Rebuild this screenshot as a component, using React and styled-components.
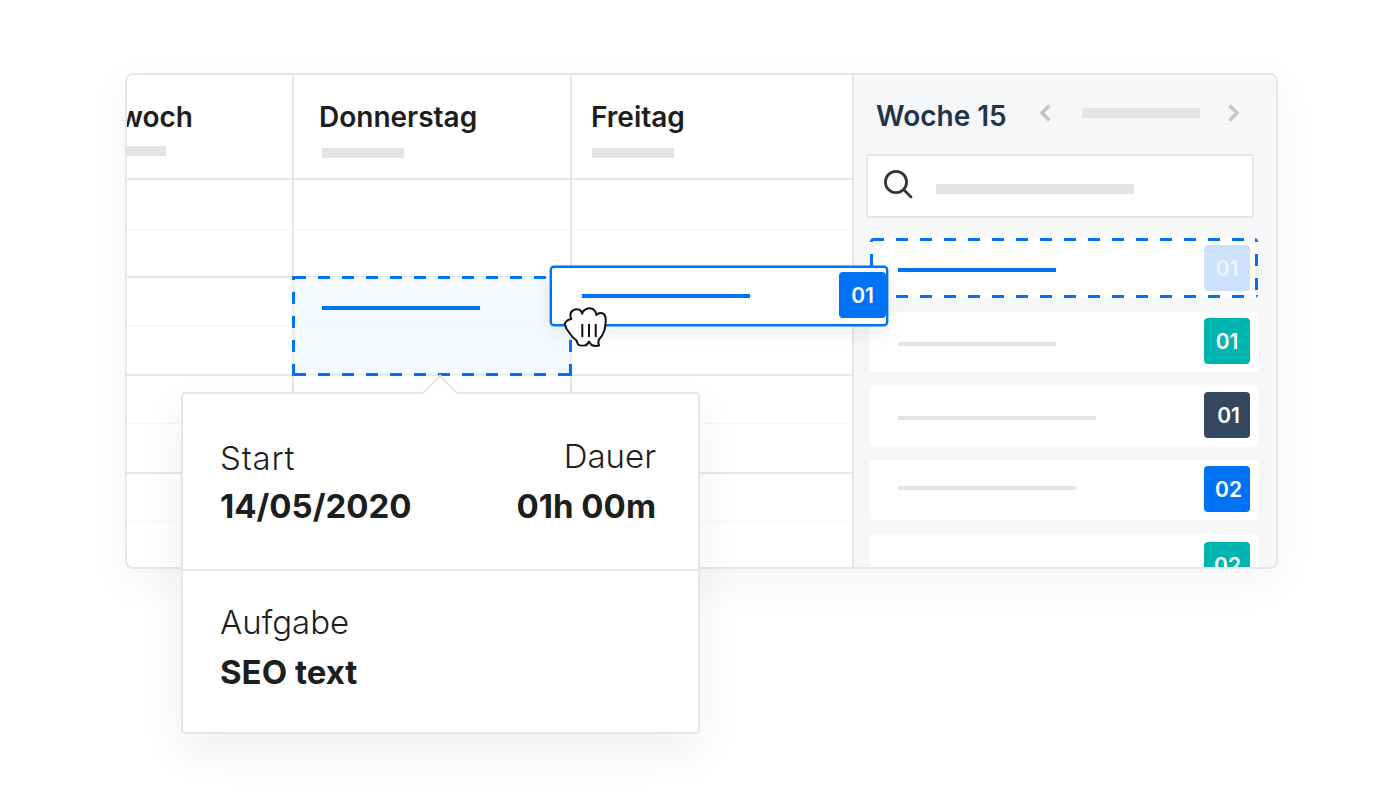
import React from "react";
import styled, { createGlobalStyle, css } from "styled-components";

const BLUE = "#0073f5";
const LINE = "#e6e6e6";
const BAR = "#e3e4e6";
const INK = "#1d1e20";

const Global = createGlobalStyle`
  html, body { margin: 0; padding: 0; background: #fff; }
  body { font-family: Inter, "Liberation Sans", sans-serif; color: ${INK}; overflow: hidden; }
`;

const dashedOutline = css`
  background-image:
    linear-gradient(90deg, ${BLUE} 50%, transparent 50%),
    linear-gradient(90deg, ${BLUE} 50%, transparent 50%),
    linear-gradient(0deg, ${BLUE} 50%, transparent 50%),
    linear-gradient(0deg, ${BLUE} 50%, transparent 50%);
  background-size: 24px 3px, 24px 3px, 3px 24px, 3px 24px;
  background-repeat: repeat-x, repeat-x, repeat-y, repeat-y;
  background-position: 2px 0, 2px 100%, 0 4px, 100% 4px;
`;

const Page = styled.div`
  width: 1400px;
  height: 804px;
  padding: 73px 0 0 125px;
  box-sizing: border-box;
`;

const Stage = styled.div`
  position: relative;
  width: 1153px;
  height: 496px;
`;

const Card = styled.div`
  display: flex;
  width: 100%;
  height: 100%;
  box-sizing: border-box;
  border: 2px solid ${LINE};
  border-radius: 8px;
  background: #fff;
  overflow: hidden;
  box-shadow: 0 12px 44px rgba(30, 40, 60, 0.05);
`;

const Calendar = styled.div`
  display: grid;
  flex: 0 0 727px;
  grid-template-columns: 167px 278px 282px;
  grid-template-rows: 105px 50px 48px repeat(3, 48px 50px);
  height: 100%;
  overflow: hidden;
`;

const DayHead = styled.div`
  display: flex;
  flex-direction: column;
  align-items: ${(p) => (p.$clipped ? "flex-end" : "flex-start")};
  box-sizing: border-box;
  padding: ${(p) => p.$pad};
  border-right: 2px solid ${LINE};
  border-bottom: 2px solid ${LINE};
  overflow: hidden;
`;

const DayName = styled.div`
  font-size: 28px;
  line-height: 32px;
  font-weight: 600;
  white-space: nowrap;
  flex: none;
`;

const DayBar = styled.div`
  width: 82px;
  height: 10px;
  background: ${BAR};
  margin: ${(p) => p.$margin};
`;

const Cell = styled.div`
  position: relative;
  box-sizing: border-box;
  border-right: 2px solid ${LINE};
  border-bottom: ${(p) => (p.$major ? `2px solid ${LINE}` : "1px solid #f5f5f5")};
`;

const GhostSlot = styled.div`
  position: absolute;
  left: -2px;
  top: -2px;
  z-index: 1;
  width: 280px;
  height: 100px;
  padding: 30px 0 0 30px;
  box-sizing: border-box;
  background-color: rgba(232, 243, 252, 0.5);
  ${dashedOutline}
`;

const Stroke = styled.div`
  width: ${(p) => p.$w}px;
  height: 4px;
  background: ${(p) => (p.$active ? BLUE : BAR)};
  margin-top: ${(p) => p.$top || 0}px;
`;

const Sidebar = styled.aside`
  flex: 1;
  min-width: 0;
  background: #f6f7f9;
  padding-left: 12px;
  overflow: hidden;
`;

const SideHead = styled.div`
  display: flex;
  align-items: center;
  height: 79px;
  box-sizing: border-box;
  padding: 3px 0 0 10px;
`;

const Week = styled.div`
  font-size: 28px;
  line-height: 32px;
  font-weight: 600;
  color: #22344a;
  white-space: nowrap;
`;

const Nav = styled.div`
  display: flex;
  align-items: center;
  margin: 0 0 7px 31px;
`;

const NavBar = styled.div`
  width: 118px;
  height: 10px;
  background: ${BAR};
  margin: 0 27px 0 30px;
`;

const Search = styled.div`
  display: flex;
  align-items: center;
  width: 388px;
  height: 64px;
  box-sizing: border-box;
  border: 2px solid ${LINE};
  background: #fff;
  padding: 0 0 4px 15px;
  margin-bottom: 20px;
`;

const SearchBar = styled.div`
  width: 198px;
  height: 10px;
  background: ${BAR};
  margin: 10px 0 0 23px;
`;

const TaskList = styled.div`
  display: flex;
  flex-direction: column;
  gap: 14px;
  padding-left: 4px;
  width: 388px;
`;

const Task = styled.div`
  flex: none;
  display: flex;
  justify-content: space-between;
  align-items: flex-start;
  height: 60px;
  box-sizing: border-box;
  padding: 6px 8px 0 28px;
  background-color: #fff;
  border-radius: 4px;
  ${(p) => p.$dashed && dashedOutline}
`;

const Badge = styled.div`
  flex: none;
  display: flex;
  align-items: center;
  justify-content: center;
  box-sizing: border-box;
  width: ${(p) => p.$w || 46}px;
  height: 46px;
  margin-top: ${(p) => p.$top || 0}px;
  padding-left: ${(p) => p.$shift || 0}px;
  border-radius: 4px;
  background: ${(p) => p.$bg};
  color: ${(p) => p.$fg || "#fff"};
  font-size: 21px;
  font-weight: 600;
`;

const DragCard = styled.div`
  position: absolute;
  left: 425px;
  top: 193px;
  z-index: 3;
  display: flex;
  justify-content: space-between;
  align-items: flex-start;
  width: 338px;
  height: 60px;
  box-sizing: border-box;
  padding: 4px 0 0 30px;
  border: 2px solid ${BLUE};
  border-radius: 4px;
  background: #fff;
  box-shadow: 0 0 0 0.4px ${BLUE}, 0 8px 20px rgba(30, 40, 60, 0.07);
`;

const Cursor = styled.svg`
  position: absolute;
  left: 438px;
  top: 234px;
  z-index: 4;
`;

const Tooltip = styled.div`
  position: absolute;
  left: 56px;
  top: 319px;
  z-index: 2;
  width: 519px;
  height: 342px;
  box-sizing: border-box;
  border: 2px solid ${LINE};
  border-radius: 4px;
  background: #fff;
  box-shadow: 0 18px 44px rgba(30, 40, 60, 0.07);
  &::before {
    content: "";
    position: absolute;
    left: 244px;
    top: -14px;
    width: 26px;
    height: 26px;
    box-sizing: border-box;
    transform: rotate(45deg);
    background: #fff;
    border-top: 2px solid ${LINE};
    border-left: 2px solid ${LINE};
  }
`;

const TipTop = styled.div`
  display: flex;
  justify-content: space-between;
  height: 177px;
  box-sizing: border-box;
  padding: 42px 42px 0 37px;
  border-bottom: 2px solid ${LINE};
`;

const TipBottom = styled.div`
  padding: 31px 37px 0;
`;

const Field = styled.div`
  display: flex;
  flex-direction: column;
  align-items: ${(p) => (p.$end ? "flex-end" : "flex-start")};
  padding-top: ${(p) => p.$drop || 0}px;
`;

const Label = styled.div`
  font-size: 33px;
  line-height: 40px;
  font-weight: 300;
  letter-spacing: ${(p) => p.$track || 0}px;
  color: ${INK};
  white-space: nowrap;
`;

const Value = styled.div`
  font-size: 33px;
  line-height: 40px;
  font-weight: 700;
  margin-top: ${(p) => p.$top || 10}px;
  color: ${INK};
  white-space: nowrap;
`;

const Chevron = ({ dir }) => (
  <svg width="14" height="20" viewBox="0 0 14 20" fill="none" stroke="#c6c6c8" strokeWidth="3.6" strokeLinejoin="miter">
    <polyline points={dir === "left" ? "11.5,2.5 4,10 11.5,17.5" : "2.5,2.5 10,10 2.5,17.5"} />
  </svg>
);

const SearchIcon = () => (
  <svg width="30" height="30" viewBox="0 0 30 30" fill="none" stroke="#333436" strokeWidth="2.8" strokeLinecap="round">
    <circle cx="13" cy="13" r="10.6" />
    <line x1="21" y1="21" x2="28" y2="28" />
  </svg>
);

const HandCursor = () => (
  <Cursor width="44" height="41" viewBox="0 0 44 41" aria-hidden="true">
    <path
      d="M1.700 16.700Q4 12.500 8.300 12Q5.500 5 11.700 2.500Q15.500 1.500 18 4L19.300 6.700Q20 2.500 25.500 1.200Q31 1 33 6L33.300 8Q37 4.500 41 7.200Q43.200 9.500 42.700 14Q42.500 20 41.200 24Q39.500 29 36 32.500Q34.800 35 36 38.500Q32 39.500 28.500 38L26 34.500Q24.500 38 21.700 38.500Q17 39 15 37.500Q14 34 13 33Q10 31 8 28L3.300 21.500Z"
      fill="#fff"
      stroke="#111"
      strokeWidth="2"
      strokeLinejoin="round"
    />
    <path d="M19.300 17v13M26 17v13M32.700 17v13" fill="none" stroke="#111" strokeWidth="2" />
  </Cursor>
);

const tasks = [
  { id: 0, label: "01", bg: "#cce2fc", fg: "#eaf3fe", dashed: true, w: 158, active: true, line: 24, top: 1 },
  { id: 1, label: "01", bg: "#00b5ad", w: 158, line: 24 },
  { id: 2, label: "01", bg: "#34495f", w: 198, line: 24, shift: 3 },
  { id: 3, label: "02", bg: BLUE, w: 178, line: 20, shift: 3 },
  { id: 4, label: "02", bg: "#00b5ad", top: 2, shift: 1 },
];

const rowCount = 8;
const GHOST_CELL = 7;

export default function App() {
  return (
    <Page>
      <Global />
      <Stage>
        <Card>
          <Calendar>
            <DayHead $clipped $pad="26px 99px 0 0">
              <DayName>Mittwoch</DayName>
              <DayBar $margin="13px 27px 0 0" />
            </DayHead>
            <DayHead $pad="26px 0 0 25px">
              <DayName>Donnerstag</DayName>
              <DayBar $margin="15px 0 0 3px" />
            </DayHead>
            <DayHead $pad="26px 0 0 19px">
              <DayName>Freitag</DayName>
              <DayBar $margin="15px 0 0 1px" />
            </DayHead>
            {Array.from({ length: rowCount * 3 }, (_, i) => (
              <Cell key={i} $major={Math.floor(i / 3) % 2 === 1}>
                {i === GHOST_CELL && (
                  <GhostSlot>
                    <Stroke $active $w={158} />
                  </GhostSlot>
                )}
              </Cell>
            ))}
          </Calendar>
          <Sidebar>
            <SideHead>
              <Week>Woche 15</Week>
              <Nav>
                <Chevron dir="left" />
                <NavBar />
                <Chevron dir="right" />
              </Nav>
            </SideHead>
            <Search>
              <SearchIcon />
              <SearchBar />
            </Search>
            <TaskList>
              {tasks.map((t) => (
                <Task key={t.id} $dashed={t.dashed}>
                  {t.w ? <Stroke $w={t.w} $active={t.active} $top={t.line} /> : <span />}
                  <Badge $bg={t.bg} $fg={t.fg} $top={t.top} $shift={t.shift}>
                    {t.label}
                  </Badge>
                </Task>
              ))}
            </TaskList>
          </Sidebar>
        </Card>
        <Tooltip>
          <TipTop>
            <Field $drop={2}>
              <Label $track={0.8}>Start</Label>
              <Value $top={8}>14/05/2020</Value>
            </Field>
            <Field $end>
              <Label>Dauer</Label>
              <Value>01h 00m</Value>
            </Field>
          </TipTop>
          <TipBottom>
            <Label>Aufgabe</Label>
            <Value>SEO text</Value>
          </TipBottom>
        </Tooltip>
        <DragCard>
          <Stroke $active $w={168} $top={22} />
          <Badge $bg={BLUE} $w={47}>01</Badge>
        </DragCard>
        <HandCursor />
      </Stage>
    </Page>
  );
}
